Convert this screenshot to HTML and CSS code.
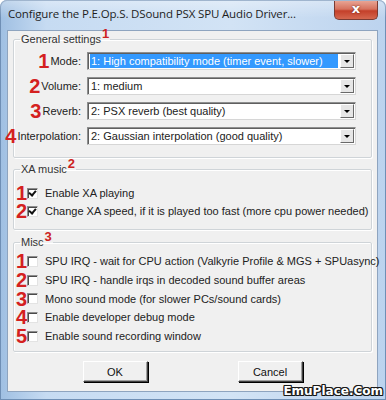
FILE: index.html
```html
<!DOCTYPE html>
<html>
<head>
    <meta charset="utf-8" />
    <title>Configure the P.E.Op.S. DSound PSX SPU Audio Driver...</title>
    <link rel="stylesheet" href="styles.css">
</head>
<body>
    <div id="window">
        <div id="titlebar">
            <span id="title">Configure the P.E.Op.S. DSound PSX SPU Audio Driver...</span>
            <div id="close">x</div>
        </div>
        <div id="client">
            <fieldset class="group" id="general">
                <legend>General settings<sup class="tag">1</sup></legend>
                <div class="setting">
                    <div class="label"><span class="num">1</span>Mode:</div>
                    <div class="combo"><span class="value selected">1: High compatibility mode (timer event, slower)</span><span class="arrow"></span></div>
                </div>
                <div class="setting">
                    <div class="label"><span class="num">2</span>Volume:</div>
                    <div class="combo"><span class="value">1: medium</span><span class="arrow"></span></div>
                </div>
                <div class="setting">
                    <div class="label"><span class="num">3</span>Reverb:</div>
                    <div class="combo"><span class="value">2: PSX reverb (best quality)</span><span class="arrow"></span></div>
                </div>
                <div class="setting">
                    <div class="label"><span class="num">4</span>Interpolation:</div>
                    <div class="combo"><span class="value">2: Gaussian interpolation (good quality)</span><span class="arrow"></span></div>
                </div>
            </fieldset>
            <fieldset class="group" id="xa">
                <legend>XA music<sup class="tag">2</sup></legend>
                <div class="check"><span class="num">1</span><span class="box on"></span>Enable XA playing</div>
                <div class="check"><span class="num">2</span><span class="box on"></span>Change XA speed, if it is played too fast (more cpu power needed)</div>
            </fieldset>
            <fieldset class="group" id="misc">
                <legend>Misc<sup class="tag">3</sup></legend>
                <div class="check"><span class="num">1</span><span class="box"></span>SPU IRQ - wait for CPU action (Valkyrie Profile &amp; MGS + SPUasync)</div>
                <div class="check"><span class="num">2</span><span class="box"></span>SPU IRQ - handle irqs in decoded sound buffer areas</div>
                <div class="check"><span class="num">3</span><span class="box"></span>Mono sound mode (for slower PCs/sound cards)</div>
                <div class="check"><span class="num">4</span><span class="box"></span>Enable developer debug mode</div>
                <div class="check"><span class="num">5</span><span class="box"></span>Enable sound recording window</div>
            </fieldset>
            <div id="buttons">
                <button class="btn">OK</button>
                <button class="btn">Cancel</button>
            </div>
        </div>
        <div id="watermark">EmuPlace.Com</div>
    </div>
</body>
</html>
```

FILE: styles.css
```css
html, body {
    margin: 0;
    padding: 0;
    background: #ffffff;
}
#window {
    position: relative;
    width: 386px;
    height: 400px;
    box-sizing: border-box;
    padding: 0 8px 8px 7px;
    display: flex;
    flex-direction: column;
    overflow: hidden;
    border-radius: 7px 7px 0 0;
    background: linear-gradient(to right, #9fbfe2 0%, #c6dbf2 12%, #d2e3f5 60%, #bcd3ee 100%);
    box-shadow: inset 0 0 0 1px #6f8fb5;
}
#titlebar {
    height: 30px;
    flex-shrink: 0;
    display: flex;
    align-items: flex-start;
    justify-content: space-between;
    background: linear-gradient(to bottom, rgba(255,255,255,0.35) 0%, rgba(255,255,255,0) 60%);
    margin: 0 -8px 0 -7px;
    padding: 0 8px 0 7px;
}
#title {
    margin: 6px 0 0 1px;
    font-family: "Open Sans", "Liberation Sans", sans-serif;
    font-size: 11.5px;
    color: #1e1e1e;
    letter-spacing: -0.15px;
    white-space: nowrap;
    overflow: hidden;
}
#close {
    flex-shrink: 0;
    width: 44px;
    height: 19px;
    margin: 1px 0 0 0;
    box-sizing: border-box;
    border: 1px solid #7a3b33;
    border-top: none;
    border-radius: 0 0 5px 5px;
    background: linear-gradient(to bottom, #e8a493 0%, #d6725e 45%, #c4402a 55%, #d4674f 100%);
    color: #ffffff;
    font-family: "DejaVu Sans", sans-serif;
    font-weight: bold;
    font-size: 13px;
    line-height: 16px;
    text-align: center;
    text-shadow: 0 0 2px #5a1a10;
}
#client {
    flex: 1;
    min-width: 0;
    background: #f0f0f0;
    border: 1px solid #8ea4bf;
    padding: 0 5px;
    font-family: "Liberation Sans", Arial, sans-serif;
    font-size: 11px;
    color: #222222;
}
.group {
    min-width: 0;
    margin: 0;
    border: 1px solid #cfd4d8;
    box-shadow: inset 1px 1px 0 #ffffff, 1px 1px 0 #ffffff;
    border-radius: 2px;
    padding: 0;
}
.group legend {
    padding: 0 1px;
    margin-left: 6px;
    font-size: 11px;
    line-height: 14px;
    color: #333333;
}
.tag {
    color: #cc2222;
    font-size: 13px;
    font-weight: bold;
    vertical-align: 0;
    position: relative;
    top: -5px;
    margin-left: 1px;
}
#general {
    margin-top: 1px;
    padding: 6px 0 12px 0;
}
.setting {
    display: grid;
    grid-template-columns: 67px 269px;
    column-gap: 6px;
    height: 18px;
    margin-bottom: 7px;
}
.setting:last-child {
    margin-bottom: 0;
}
.label {
    white-space: nowrap;
    display: flex;
    justify-content: flex-end;
    align-items: center;
}
.num {
    color: #d42020;
    font-family: "Liberation Sans", Arial, sans-serif;
    font-weight: bold;
    font-size: 20px;
    line-height: 18px;
    margin-right: 1px;
}
.combo {
    display: flex;
    align-items: center;
    box-sizing: border-box;
    height: 18px;
    background: #ffffff;
    border: 1px solid #8e8f8f;
    border-right-color: #d6d6d6;
    border-bottom-color: #d6d6d6;
    box-shadow: inset 1px 1px 0 #5f5f5f;
    padding: 1px 1px 1px 2px;
}
.value {
    flex: 1;
    height: 100%;
    display: flex;
    align-items: center;
    padding-left: 1px;
    white-space: nowrap;
    overflow: hidden;
}
.value.selected {
    background: #3399ff;
    color: #ffffff;
    margin-right: 2px;
}
.arrow {
    width: 14px;
    height: 14px;
    box-sizing: border-box;
    border: 1px solid #ffffff;
    border-right-color: #696969;
    border-bottom-color: #696969;
    background: #e6e6e6;
    position: relative;
}
.arrow::after {
    content: "";
    position: absolute;
    left: 3px;
    top: 5px;
    border-left: 3px solid transparent;
    border-right: 3px solid transparent;
    border-top: 3px solid #000000;
}
#xa {
    margin-top: 4px;
    padding: 8px 0 9px 0;
}
#misc {
    margin-top: 5px;
    padding: 3px 0 6px 0;
}
.check {
    display: flex;
    align-items: center;
    height: 18px;
    padding-left: 2px;
    white-space: nowrap;
}
#misc .check {
    height: 18.7px;
}
.check .num {
    width: 11px;
    margin-right: 0;
    text-align: center;
}
.box {
    flex-shrink: 0;
    width: 11px;
    height: 11px;
    box-sizing: border-box;
    margin-right: 7px;
    background: #ffffff;
    border: 1px solid #8d8d8d;
    border-right-color: #e3e3e3;
    border-bottom-color: #e3e3e3;
    box-shadow: inset 1px 1px 0 #4a4a4a;
    position: relative;
}
.box.on::after {
    content: "";
    position: absolute;
    left: 2px;
    top: 0px;
    width: 3px;
    height: 5px;
    border: solid #111111;
    border-width: 0 2px 2px 0;
    transform: rotate(40deg);
}
#buttons {
    display: flex;
    justify-content: center;
    gap: 90px;
    margin-top: 9px;
}
.btn {
    width: 65px;
    height: 21px;
    margin: 0;
    padding: 0;
    font-family: "Liberation Sans", Arial, sans-serif;
    font-size: 11px;
    color: #111111;
    background: #f0f0f0;
    border: 1px solid #ffffff;
    border-right-color: #404040;
    border-bottom-color: #404040;
    box-shadow: 1px 1px 0 #000000, inset -1px -1px 0 #a0a0a0;
}
#watermark {
    position: absolute;
    right: 3px;
    bottom: 2px;
    font-family: "DejaVu Sans", sans-serif;
    font-weight: bold;
    font-size: 12px;
    color: #ffffff;
    letter-spacing: 0;
    text-shadow: -1px -1px 0 #1a1a1a, 1px -1px 0 #1a1a1a, -1px 1px 0 #1a1a1a, 1px 1px 0 #1a1a1a, 0 1px 0 #1a1a1a, 0 -1px 0 #1a1a1a, 1px 0 0 #1a1a1a, -1px 0 0 #1a1a1a;
}
```
